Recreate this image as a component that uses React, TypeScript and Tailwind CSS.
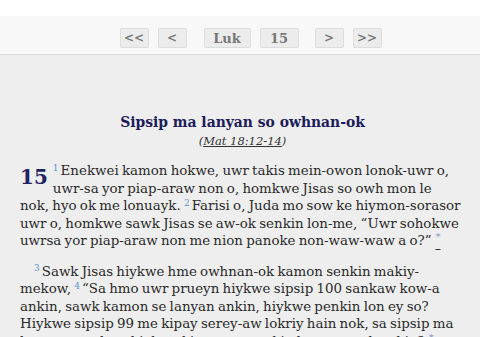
import React from 'react';

const serif = { fontFamily: '"DejaVu Serif", "Liberation Serif", serif' };

const NavButton: React.FC<{ label: string; className?: string }> = ({ label, className = 'w-[29px]' }) => (
  <button
    className={`h-5 rounded-[2px] border border-[#dddddd] bg-[#ececec] text-[12px] font-bold leading-none text-[#777777] ${className}`}
  >
    {label}
  </button>
);

const Verse: React.FC<{ n: string }> = ({ n }) => (
  <sup className="mr-[2px] text-[9px] text-[#5b93d8]">{n}</sup>
);

const Note: React.FC = () => (
  <sup className="ml-[4px] text-[10px] text-[#7f93c8] underline decoration-[#333] underline-offset-[9px]">*</sup>
);

export default function App() {
  return (
    <div className="min-h-screen bg-[#eeeeee]" style={serif}>
      <div className="bg-white pt-4">
        <div className="flex h-[39px] items-start justify-center gap-[9px] border-b border-[#dadada] bg-[#f8f8f8] pl-[21px] pt-3">
          <NavButton label="<<" />
          <NavButton label="<" />
          <NavButton label="Luk" className="ml-2 w-[47px] text-[13px]" />
          <NavButton label="15" className="w-[39px] text-[13px]" />
          <NavButton label=">" className="ml-[7px] w-[29px]" />
          <NavButton label=">>" />
        </div>
      </div>

      <div className="pl-5 pr-[15px] pt-[58px] text-[13.4px] leading-[17.5px] text-[#2a2a2a] [word-spacing:-1px]">
        <h2 className="text-center text-[13.9px] font-bold leading-[18px] text-[#1c1c5a] [word-spacing:0px]">
          Sipsip ma lanyan so owhnan-ok
        </h2>
        <p className="mt-[2px] text-center text-[11.5px] leading-[17px] italic text-[#333333] [word-spacing:0px]">
          (<span className="underline">Mat 18:12-14</span>)
        </p>

        <p className="mt-3">
          <span className="float-left mr-[5px] mt-[5px] text-[20px] font-bold leading-[20px] text-[#1f2560]">15</span>
          <Verse n="1" />
          Enekwei kamon hokwe, uwr takis mein-owon lonok-uwr o, <span className="whitespace-nowrap">uwr-sa</span> yor
          piap-araw non o, homkwe Jisas so owh mon le <span className="whitespace-nowrap">nok, hyo</span> ok me
          lonuayk. <Verse n="2" />
          Farisi o, Juda mo sow ke hiymon-sorasor uwr o, homkwe sawk Jisas se aw-ok senkin lon-me, “Uwr sohokwe uwrsa
          yor piap-araw non me nion panoke non-waw-waw a o?”
          <Note />
        </p>

        <p className="mt-[13px] indent-[14px]">
          <Verse n="3" />
          Sawk Jisas hiykwe hme owhnan-ok kamon senkin makiy-mekow, <Verse n="4" />
          “Sa hmo uwr prueyn hiykwe sipsip 100 sankaw kow-a ankin, sawk kamon se lanyan ankin, hiykwe penkin lon ey so?
          Hiykwe sipsip 99 me kipay serey-aw lokriy hain nok, sa sipsip ma lanyan so tokwe hiykwe kiyan sey penkin lon
          ey, sawk ankin?
          <Note />
        </p>
      </div>
    </div>
  );
}
